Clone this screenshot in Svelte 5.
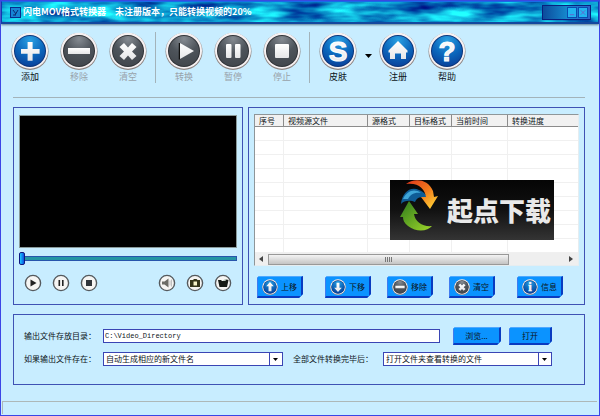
<script>
  let position = $state(0);
  let directory = $state('C:\\Video_Directory');

  const groups = [
    [
      { id: 'add', label: '添加', on: true },
      { id: 'remove', label: '移除', on: false },
      { id: 'clear', label: '清空', on: false }
    ],
    [
      { id: 'play', label: '转换', on: false },
      { id: 'pause', label: '暂停', on: false },
      { id: 'stop', label: '停止', on: false }
    ]
  ];
  const help = [
    { id: 'home', label: '注册', on: true },
    { id: 'help', label: '帮助', on: true }
  ];
  const columns = ['序号', '视频源文件', '源格式', '目标格式', '当前时间', '转换进度'];
  const rows = Array.from({ length: 9 }, (_, i) => i);
  const actions = [
    [{ id: 'up', label: '上移', on: true }],
    [
      { id: 'down', label: '下移', on: true },
      { id: 'remove', label: '移除', on: false },
      { id: 'clear', label: '清空', on: false }
    ],
    [{ id: 'info', label: '信息', on: true }]
  ];
  const players = [
    { id: 'play', label: '播放' },
    { id: 'pause', label: '暂停' },
    { id: 'stop', label: '停止' }
  ];
  const extras = [
    { id: 'volume', label: '音量' },
    { id: 'snapshot', label: '截图' },
    { id: 'folder', label: '文件夹' }
  ];
</script>

{#snippet disc(id, on)}
  <svg class="disc" viewBox="0 0 38 38" aria-hidden="true">
    <circle cx="19" cy="19.4" r="18.5" fill="#8d8482" />
    <circle cx="19" cy="18.7" r="18" fill="#f6f1f2" />
    <circle cx="19" cy="19" r="16" fill={on ? '#0a357c' : '#303338'} />
    <circle cx="19" cy="19" r="15" fill={on ? 'url(#blue-disc)' : 'url(#grey-disc)'} />
    <g fill="url(#glyph)">
      {#if id === 'add'}
        <path d="M16.600 10h5v7h7v4.800h-7v7h-5v-7h-6.600v-4.800h6.600z" />
      {:else if id === 'remove'}
        <rect x="8" y="16" width="22" height="6" />
      {:else if id === 'clear'}
        <path d="M15 11l4 4.500 4-4.500 4.500 4-4.500 4.500 4.500 4.500-4.500 4-4-4.500-4 4.500-4.500-4 4.500-4.500-4.500-4.500z" />
      {:else if id === 'play'}
        <path d="M14.500 11v16.500" stroke="#111" stroke-width="1.500" />
        <path d="M15 11l14 8-14 8z" />
      {:else if id === 'pause'}
        <rect x="12" y="12" width="5.500" height="14" rx="1" />
        <rect x="21" y="12" width="5.500" height="14" rx="1" />
      {:else if id === 'stop'}
        <rect x="12" y="12" width="14" height="14" rx="1" />
      {:else if id === 'home'}
        <path d="M19 9l9.500 9.500v2h-1.500v6.500h-5v-5.500h-6v5.500h-5v-6.500h-1.500v-2z" />
      {:else if id === 'skin'}
        <text x="19" y="29" text-anchor="middle" class="mark">S</text>
      {:else if id === 'help'}
        <text x="19" y="29" text-anchor="middle" class="mark">?</text>
      {:else if id === 'up'}
        <path d="M19 7l9 10h-5.500v12h-7v-12h-5.500z" />
      {:else if id === 'down'}
        <path d="M19 31l9-10h-5.500v-12h-7v12h-5.500z" />
      {:else if id === 'info'}
        <text x="19" y="29" text-anchor="middle" class="mark serif">i</text>
      {/if}
    </g>
  </svg>
{/snippet}

{#snippet tool(item)}
  <button class="tool" disabled={!item.on}>
    {@render disc(item.id, item.on)}
    <span>{item.label}</span>
  </button>
{/snippet}

{#snippet player(item)}
  <button class="player" aria-label={item.label}>
    <svg viewBox="0 0 18 18" aria-hidden="true">
      <circle cx="9" cy="9" r="7.600" fill="#f6f5f3" stroke="#555a5e" stroke-width="1.400" />
      {#if item.id === 'play'}
        <path d="M6.500 5.500l6 3.500-6 3.500z" fill="#222" />
      {:else if item.id === 'pause'}
        <path d="M6.500 6h1.600v6h-1.600zM10 6h1.600v6h-1.600z" fill="#222" />
      {:else if item.id === 'stop'}
        <rect x="6" y="6" width="6" height="6" fill="#30353a" />
      {:else if item.id === 'volume'}
        <path d="M4 7.500h2.500l4-3v9l-4-3h-2.500z" fill="#6c6c66" />
        <path d="M12 6.500v5M13.500 5.500v7" stroke="#aaa" stroke-width=".7" />
      {:else if item.id === 'snapshot'}
        <path d="M4 6h3l1-1h2.500l1 1h2.500v7h-10z" fill="#35351a" />
        <path d="M7.500 7.500h3.500v4h-3.500z" fill="#f7f3c8" />
      {:else}
        <path d="M4 6h3l1 1h3l1.500-1.500 2 .5-1.500 7h-7.500z" fill="#171b16" />
        <path d="M9.500 6.500l3-1" stroke="#8aa38b" stroke-width=".8" />
      {/if}
    </svg>
  </button>
{/snippet}

<svg class="defs" width="0" height="0" aria-hidden="true">
  <defs>
    <radialGradient id="blue-disc" cx=".5" cy=".15" r=".95">
      <stop offset="0" stop-color="#2aa0e2" />
      <stop offset=".5" stop-color="#0c68bd" />
      <stop offset="1" stop-color="#093a94" />
    </radialGradient>
    <radialGradient id="grey-disc" cx=".5" cy=".1" r=".95">
      <stop offset="0" stop-color="#858b92" />
      <stop offset=".5" stop-color="#4e545b" />
      <stop offset="1" stop-color="#41464c" />
    </radialGradient>
    <linearGradient id="glyph" x1="0" y1="0" x2="0" y2="1">
      <stop offset="0" stop-color="#fff" />
      <stop offset="1" stop-color="#e6e6e8" />
    </linearGradient>
  </defs>
</svg>

<main class="window">
  <header class="titlebar">
    <svg class="water" aria-hidden="true">
      <filter id="ripple" x="0" y="0" width="100%" height="100%" color-interpolation-filters="sRGB">
        <feTurbulence type="fractalNoise" baseFrequency=".025 .1" numOctaves="3" seed="8" />
        <feColorMatrix values="0 .3 0 0 -.1  0 1.500 0 0 -.13  0 .8 0 0 .42  0 0 0 0 1" />
      </filter>
      <rect width="100%" height="100%" filter="url(#ripple)" />
    </svg>
    <svg class="app" viewBox="0 0 11 11" aria-hidden="true">
      <rect x=".5" y=".5" width="10" height="10" fill="#1685d5" stroke="#082c8c" />
      <path d="M3 3l3 4M5 8l3-5M3 8h3" stroke="#0b2a70" fill="none" />
    </svg>
    <h1>闪电MOV格式转换器<span>未注册版本，只能转换视频的20%</span></h1>
    <div class="controls">
      <button aria-label="最小化"><svg viewBox="0 0 9 9"><path d="M2 7h5" /></svg></button>
      <button aria-label="关闭"><svg viewBox="0 0 9 9"><path d="M2 2l5 5M7 2l-5 5" /></svg></button>
    </div>
  </header>

  <nav class="toolbar">
    {#each groups as group}
      <div class="group">
        {#each group as item}{@render tool(item)}{/each}
      </div>
      <i class="rule"></i>
    {/each}
    {@render tool({ id: 'skin', label: '皮肤', on: true })}
    <button class="caret" aria-label="选择皮肤"><svg viewBox="0 0 7 4"><path d="M0 0h7l-3.500 4z" /></svg></button>
    <div class="group">
      {#each help as item}{@render tool(item)}{/each}
    </div>
  </nav>

  <div class="body">
    <div class="columns">
      <section class="panel preview">
        <div class="screen"></div>
        <input class="seek" type="range" min="0" max="100" bind:value={position} aria-label="播放进度" />
        <div class="players">
          <div>{#each players as item}{@render player(item)}{/each}</div>
          <div>{#each extras as item}{@render player(item)}{/each}</div>
        </div>
      </section>

      <section class="panel queue">
        <div class="list">
          <div class="rows">
            <table>
              <colgroup><col class="c1" /><col class="c2" /><col class="c3" /><col class="c3" /><col class="c4" /><col /></colgroup>
              <thead><tr>{#each columns as name}<th>{name}</th>{/each}</tr></thead>
              <tbody>
                {#each rows as row (row)}
                  <tr>{#each columns as name}<td></td>{/each}</tr>
                {/each}
              </tbody>
            </table>
          </div>
          <div class="scroll">
            <svg viewBox="0 0 4 6"><path d="M4 0v6l-4-3z" /></svg>
            <div class="track"><div class="thumb"><i></i><i></i><i></i><i></i></div></div>
            <svg viewBox="0 0 4 6"><path d="M0 0v6l4-3z" /></svg>
          </div>
          <div class="brand">
            <svg viewBox="0 0 40 60" aria-hidden="true">
              <defs>
                <linearGradient id="flame" x1="0" y1="0" x2="1" y2="1"><stop offset="0" stop-color="#e0341c" /><stop offset=".5" stop-color="#f47a1c" /><stop offset="1" stop-color="#ffe23a" /></linearGradient>
                <linearGradient id="leaf" x1="0" y1="0" x2="1" y2="1"><stop offset="0" stop-color="#2d7a1c" /><stop offset="1" stop-color="#9ed62a" /></linearGradient>
              </defs>
              <path d="M2 24C3 13 11 6 20 10c5 2 9 6 9 10-5-4-11-4-13 2-4-2-11-2-14 2z" fill="#0f5c96" />
              <path d="M4 19C8 11 15 8 22 13c-7-1-11 2-13 6z" fill="#3fa6d8" />
              <path d="M7 4C14-2 29-2 34 11l1 6 4-1-8 13-9-12h5C26 9 19 2 7 4z" fill="url(#flame)" />
              <path d="M1 37l9-16 9 13h-4c1 8 9 13 18 12-4 5-15 7-24 0-4-3-5-6-5-9z" fill="url(#leaf)" />
            </svg>
            <strong>起点下载</strong>
          </div>
        </div>
        <div class="actions">
          {#each actions as set}
            <div>
              {#each set as item}
                <button class="blue">{@render disc(item.id, item.on)}{item.label}</button>
              {/each}
            </div>
          {/each}
        </div>
      </section>
    </div>

    <section class="panel output">
      <div class="line">
        <label class="first" for="dir">输出文件存放目录：</label>
        <input id="dir" type="text" bind:value={directory} />
        <div class="pair">
          <button class="blue browse">浏览...</button>
          <button class="blue open">打开</button>
        </div>
      </div>
      <div class="line second">
        <label class="first" for="exists">如果输出文件存在：</label>
        <div class="select wide">
          <select id="exists"><option>自动生成相应的新文件名</option></select>
          <svg viewBox="0 0 5 3"><path d="M0 0h5l-2.500 3z" /></svg>
        </div>
        <label class="after" for="done">全部文件转换完毕后：</label>
        <div class="select">
          <select id="done"><option>打开文件夹查看转换的文件</option></select>
          <svg viewBox="0 0 5 3"><path d="M0 0h5l-2.500 3z" /></svg>
        </div>
      </div>
    </section>
  </div>

  <footer class="status"></footer>
</main>

<style>
  :global(body) { margin: 0; }
  * { box-sizing: border-box; }
  button, input, select { font: inherit; color: inherit; margin: 0; padding: 0; border: 0; background: none; border-radius: 0; }
  svg { display: block; flex: none; }
  .defs { position: absolute; }

  .window {
    display: flex; flex-direction: column; min-height: 100vh;
    border: 1px solid #3b45e6; background: #c8edff; color: #0c1418;
    font: 8px/12px "Noto Sans CJK SC", "Liberation Sans", sans-serif;
  }

  .titlebar {
    position: relative; display: flex; align-items: center; height: 23px; padding: 0 7px 0 8px;
    background: #0797cf; border: 1px solid #1238b0; border-top-color: #1a6ae8; border-bottom: 2px solid #14489e;
    box-shadow: 0 1px 2px #5d7f93;
  }
  .water { position: absolute; inset: 0; width: 100%; height: 100%; }
  .app { position: relative; width: 11px; height: 11px; }
  h1 { position: relative; flex: 1; margin: 0 0 0 2px; font-size: 9px; line-height: 14px; font-weight: 700; color: #fff; white-space: nowrap; }
  h1 span { margin-left: 9px; }
  .controls {
    position: relative; display: flex; justify-content: flex-end; align-items: center; gap: 1px;
    width: 49px; height: 15px; padding-right: 2px; border: 1px solid #0a1f7f;
    background: linear-gradient(90deg, #0c4b9c, #1587cc 50%, #2b62c8);
  }
  .controls button { width: 10px; height: 11px; border: 1px solid #0a4bb0; background: #22b4f0; }
  .controls svg { width: 8px; height: 9px; stroke: #6a5cc8; fill: none; }

  .toolbar { display: flex; padding: 8px 10px 0; }
  .group { display: flex; gap: 11px; }
  .tool { display: flex; flex-direction: column; align-items: center; width: 38px; font-size: 9px; line-height: 12px; gap: 1px; }
  .tool:disabled { color: #98a2aa; }
  .disc { width: 38px; height: 38px; }
  .mark { font: 900 28px "Liberation Sans", sans-serif; stroke: #fff; stroke-width: 1; }
  .mark.serif { font: 700 30px "Liberation Serif", serif; }
  .rule { width: 1px; margin: 0 9px 0 8px; background: #a3b3ba; }
  .caret { display: flex; align-items: center; justify-content: center; width: 22px; height: 48px; }
  .caret svg { width: 7px; height: 4px; }

  .body { margin: 14px 14px 0 12px; padding-top: 9px; border-top: 1px solid #a3b3ba; }
  .columns { display: grid; grid-template-columns: 230fr 337fr; gap: 5px; }
  .panel { border: 1px solid #3f52b4; min-width: 0; }

  .preview { padding: 7px 5px 0; }
  .screen { height: 133px; background: #000; border: 1px solid #8a9a9a; }
  .seek { display: block; appearance: none; width: 100%; height: 14px; margin-top: 3px; }
  .seek::-webkit-slider-runnable-track { height: 5px; background: #2596a4; border: 1px solid #2855ac; }
  .seek::-webkit-slider-thumb {
    appearance: none; width: 6px; height: 13px; margin: -5px 0 0 -1px; border: 1px solid #101880; border-radius: 2px;
    background: linear-gradient(90deg, #1cc8ff, #0a50e0);
  }
  .players { display: flex; justify-content: space-between; padding: 9px 5px 12px; }
  .players div { display: flex; gap: 10px; }
  .player, .player svg { width: 18px; height: 18px; }

  .queue { padding: 6px 5px 6px; }
  .list { position: relative; border: 1px solid #8e9699; border-right-color: #e6edf0; border-bottom-color: #e6edf0; background: #fff; }
  .rows { overflow: hidden; }
  table { width: 100%; table-layout: fixed; border-collapse: separate; border-spacing: 0; }
  .c1 { width: 29px; }
  .c2 { width: 84px; }
  .c3 { width: 42px; }
  .c4 { width: 56px; }
  th {
    height: 12px; padding: 0 0 0 4px; font-weight: 400; line-height: 11px; text-align: left; white-space: nowrap;
    background: #f1f1f1; border-right: 1px solid #8b8b8b; border-bottom: 1px solid #8b8b8b;
  }
  td { height: 14px; padding: 0; border-right: 1px solid #f0f0f0; border-bottom: 1px solid #f0f0f0; }
  th:last-child, td:last-child { border-right: 0; }
  .scroll { display: flex; align-items: center; justify-content: space-between; height: 12px; padding: 0 5px 0 4px; background: #efefef; }
  .scroll svg { width: 4px; height: 6px; fill: #444; }
  .track { flex: 1; margin: 0 4px 0 5px; }
  .thumb {
    display: flex; align-items: center; justify-content: center; gap: 1px; width: 81%; height: 11px;
    border: 1px solid #999; background: linear-gradient(#f4f4f4, #dcdcdc 50%, #c4c4c4);
  }
  .thumb i { width: 1px; height: 5px; background: #777; }
  .brand {
    position: absolute; top: 65px; right: 24px; display: flex; align-items: center; width: 164px; height: 60px;
    padding-left: 9px; background: linear-gradient(#050505, #111 50%, #343434); color: #e9e9e9; overflow: hidden;
  }
  .brand svg { width: 40px; height: 60px; }
  .brand strong { margin-left: 8px; font-size: 26px; line-height: 40px; font-weight: 900; white-space: nowrap; }

  .actions { display: flex; justify-content: space-between; padding: 10px 16px 0 3px; }
  .actions div { display: flex; gap: 16px; }
  .blue {
    display: flex; align-items: center; justify-content: center; gap: 3px; width: 46px; height: 22px; white-space: nowrap;
    background: #0b93ff; border: solid; border-width: 1px 2px 2px 1px; border-color: #4fa8ff #0a3bc0 #0a3bc0 #3f7cf0;
    clip-path: polygon(2px 0, 100% 0, 100% calc(100% - 4px), calc(100% - 4px) 100%, 0 100%, 0 2px);
  }
  .blue .disc { width: 16px; height: 16px; }

  .output { margin-top: 9px; padding: 12px 32px 16px 10px; }
  .line { display: flex; align-items: center; height: 18px; }
  .second { margin-top: 5px; }
  .first { width: 79px; white-space: nowrap; }
  #dir { flex: 1; min-width: 0; height: 14px; padding: 0 1px; border: 1px solid #3a45b4; background: #fff; font: 7px/12px "Liberation Mono", monospace; }
  .pair { display: flex; gap: 8px; margin-left: 13px; }
  .blue.browse { width: 48px; height: 18px; }
  .blue.open { width: 43px; height: 18px; }
  .select { position: relative; flex: 169; min-width: 0; height: 14px; }
  .wide { flex: 180; }
  select { appearance: none; display: block; width: 100%; height: 14px; padding: 0 14px 0 2px; border: 1px solid #3a45b4; background: linear-gradient(#3a45b4, #3a45b4) right 12px top / 1px 100% no-repeat #fff; }
  .select svg { position: absolute; right: 5px; top: 6px; width: 5px; height: 3px; pointer-events: none; }
  .after { width: 90px; margin-left: 10px; white-space: nowrap; }

  .status { height: 13px; margin: auto 2px 1px 1px; border: 1px solid #adb8b8; border-width: 1px 0 0 1px; }
</style>
